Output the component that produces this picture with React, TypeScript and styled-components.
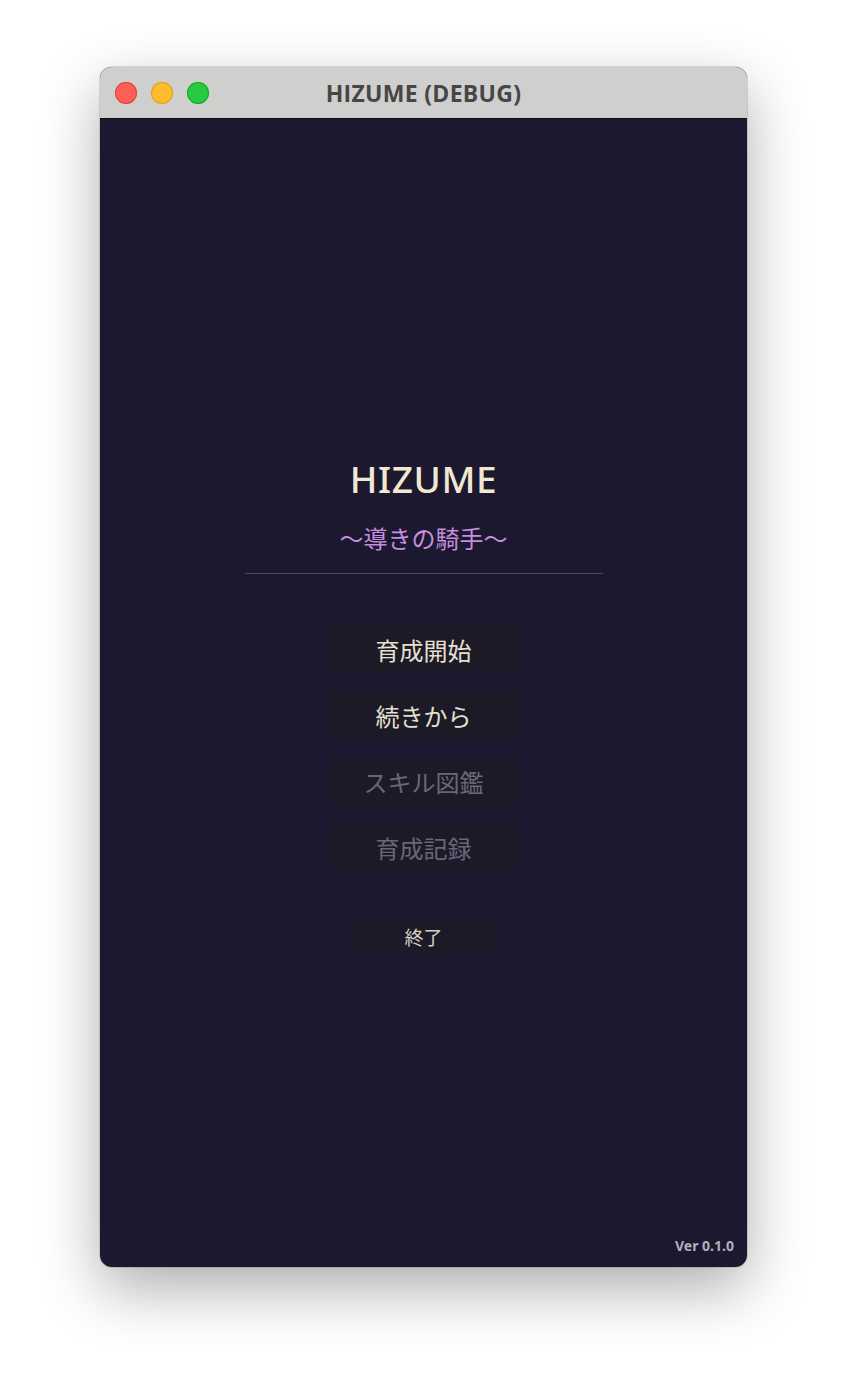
import styled, { createGlobalStyle } from 'styled-components';

const GlobalStyle = createGlobalStyle`
  html, body {
    margin: 0;
    padding: 0;
    background: #ffffff;
  }
  body {
    font-family: "Noto Sans", "Noto Sans CJK JP", sans-serif;
  }
`;

const Desktop = styled.div`
  width: 847px;
  height: 1400px;
  padding: 67px 100px 0;
  box-sizing: border-box;
`;

const Window = styled.div`
  width: 647px;
  height: 1200px;
  display: flex;
  flex-direction: column;
  border-radius: 12px;
  overflow: hidden;
  background: #1c1830;
  box-shadow: 0 0 0 1px rgba(0, 0, 0, 0.12), 0 22px 60px rgba(0, 0, 0, 0.32);
`;

const TitleBar = styled.div`
  position: relative;
  height: 52px;
  flex-shrink: 0;
  display: flex;
  align-items: center;
  justify-content: center;
  background: #cfcfcd;
  border-bottom: 1px solid #0e0c16;
  box-sizing: border-box;
`;

const Lights = styled.div`
  position: absolute;
  left: 15px;
  top: 15px;
  display: flex;
  gap: 14px;
`;

const Light = styled.span<{ $color: string; $edge: string }>`
  width: 22px;
  height: 22px;
  border-radius: 50%;
  background: ${(p) => p.$color};
  box-shadow: inset 0 0 0 1px ${(p) => p.$edge};
`;

const WindowTitle = styled.div`
  font-family: "Open Sans", "Noto Sans", sans-serif;
  font-weight: 700;
  font-size: 23px;
  color: #464646;
  letter-spacing: 0.3px;
`;

const Content = styled.main`
  flex: 1;
  display: flex;
  flex-direction: column;
  align-items: center;
  padding-top: 338px;
  box-sizing: border-box;
`;

const GameTitle = styled.h1`
  margin: 0;
  font-family: "Noto Sans", sans-serif;
  font-weight: 500;
  font-size: 37px;
  line-height: 44px;
  color: #f1e8cf;
  letter-spacing: 0.6px;
`;

const Subtitle = styled.div`
  margin-top: 21px;
  font-family: "Noto Sans CJK JP", sans-serif;
  font-size: 24px;
  line-height: 32px;
  color: #c48fdc;
`;

const Divider = styled.hr`
  width: 358px;
  height: 1px;
  margin: 19px 0 0;
  border: none;
  background: #4b4562;
`;

const Menu = styled.nav`
  margin-top: 51px;
  display: flex;
  flex-direction: column;
  align-items: center;
  gap: 18px;
`;

const MenuButton = styled.button<{ $disabled?: boolean }>`
  width: 188px;
  height: 48px;
  padding: 0;
  border: none;
  background: #1d1a28;
  font-family: "Noto Sans CJK JP", sans-serif;
  font-size: 24px;
  color: ${(p) => (p.$disabled ? '#6a6679' : '#e6e0d0')};
  cursor: ${(p) => (p.$disabled ? 'default' : 'pointer')};
`;

const ExitButton = styled.button`
  margin-top: 48px;
  width: 144px;
  height: 35px;
  padding: 0;
  border: none;
  background: #1d1a28;
  font-family: "Noto Sans CJK JP", sans-serif;
  font-size: 19px;
  color: #d6d0c2;
  cursor: pointer;
`;

const Footer = styled.div`
  margin-top: auto;
  align-self: flex-end;
  padding: 0 13px 12px 0;
  font-family: "Noto Sans", sans-serif;
  font-weight: 700;
  font-size: 14px;
  color: #b4aebb;
`;

const menuItems = [
  { label: '育成開始', disabled: false },
  { label: '続きから', disabled: false },
  { label: 'スキル図鑑', disabled: true },
  { label: '育成記録', disabled: true },
];

const App = () => {
  return (
    <>
      <GlobalStyle />
      <Desktop>
        <Window>
          <TitleBar>
            <Lights>
              <Light $color="#fe5f57" $edge="#e0443e" />
              <Light $color="#febc2e" $edge="#dea123" />
              <Light $color="#28c840" $edge="#1aab29" />
            </Lights>
            <WindowTitle>HIZUME (DEBUG)</WindowTitle>
          </TitleBar>
          <Content>
            <GameTitle>HIZUME</GameTitle>
            <Subtitle>〜導きの騎手〜</Subtitle>
            <Divider />
            <Menu>
              {menuItems.map((item) => (
                <MenuButton key={item.label} $disabled={item.disabled}>
                  {item.label}
                </MenuButton>
              ))}
            </Menu>
            <ExitButton>終了</ExitButton>
            <Footer>Ver 0.1.0</Footer>
          </Content>
        </Window>
      </Desktop>
    </>
  );
};

export default App;
